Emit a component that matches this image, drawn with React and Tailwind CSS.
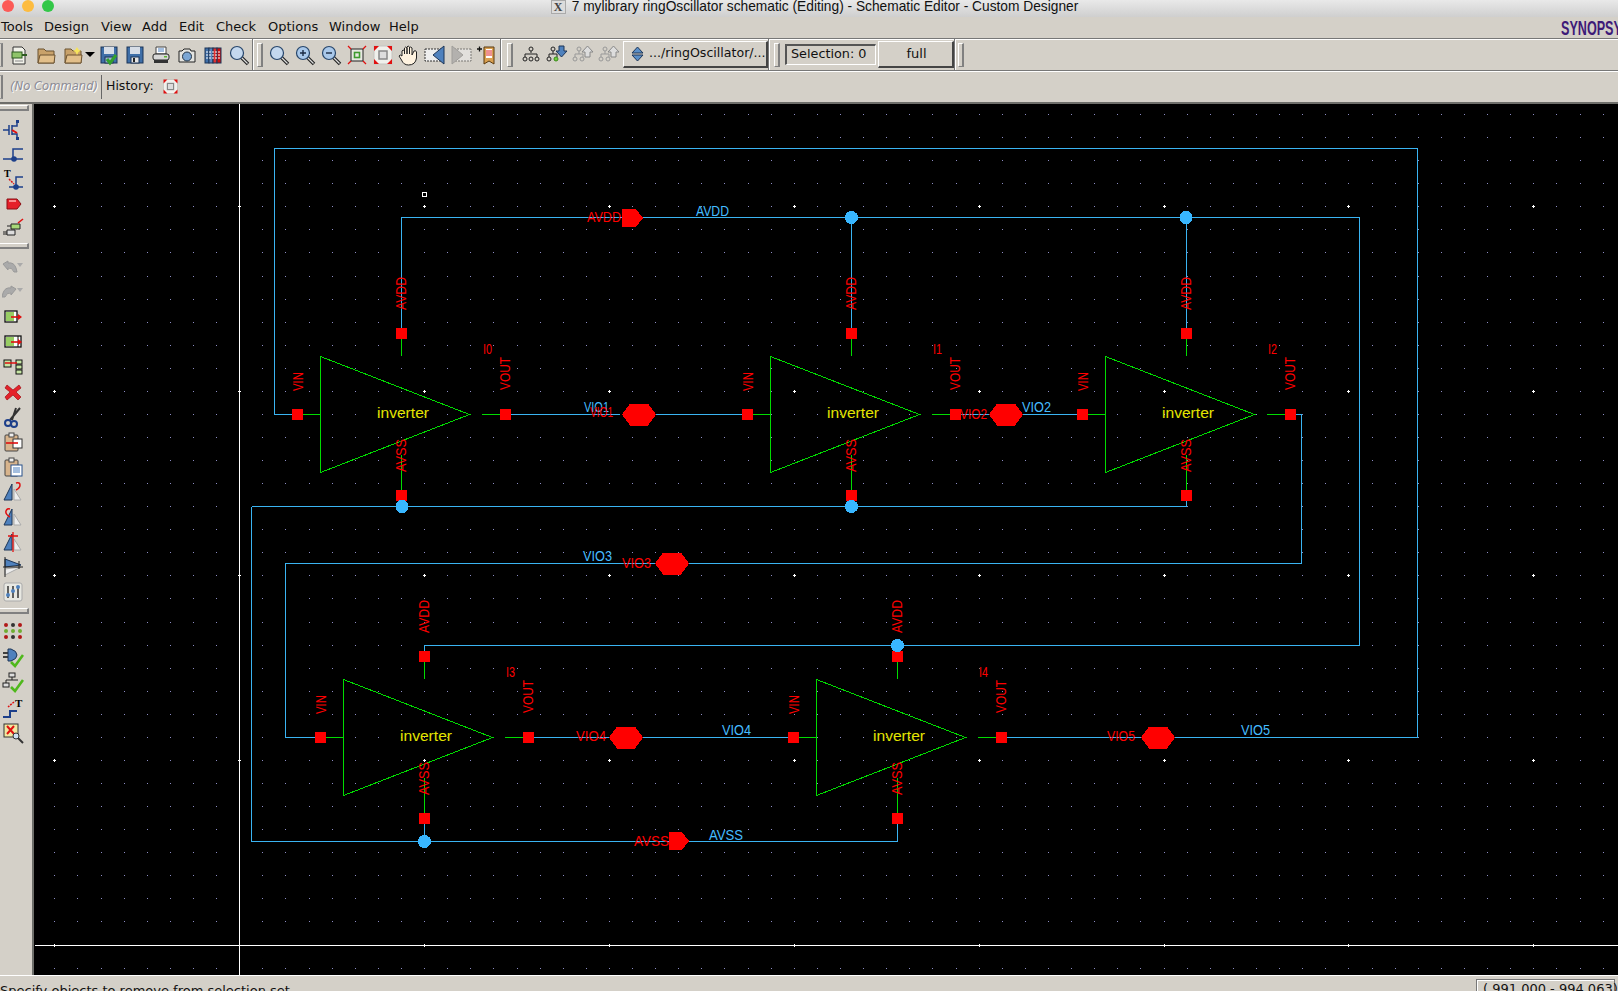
import React from 'react';

const RED = '#ff0000';
const WIRE = '#3ab4f2';
const LABEL_BLUE = '#45bcff';
const GREEN = '#00dc00';

const Svg = ({ children, size = 22 }) => (
  <svg width={size} height={size} viewBox="0 0 22 22">{children}</svg>
);

// toolbar icons
const Doc = () => (
  <Svg>
    <path d="M5 3h9l3 3v14H5z" fill="#f2f2ea" stroke="#333" />
    <rect x="4" y="8" width="10" height="6" fill="#8fc46a" stroke="#2d5a20" />
    <path d="M14 11h5" stroke="#2d5a20" strokeWidth="2" />
    <path d="M7 17h8" stroke="#888" />
  </Svg>
);
const Folder = ({ star }) => (
  <Svg>
    <path d="M3 5h6l2 2h8v12H3z" fill="#c9a26a" stroke="#6b5230" />
    <path d="M3 19l2-8h15l-1 8z" fill="#e2bf8a" stroke="#6b5230" />
    {star && <path d="M15 3l1.5 2.5L19 7l-2.5 1L15 11l-1.5-3L11 7l2.5-1.5z" fill="#f7e45c" />}
  </Svg>
);
const Disk = ({ check }) => (
  <Svg>
    <rect x="3" y="3" width="16" height="16" fill="#3f6fa8" stroke="#1d3557" />
    <rect x="6" y="3" width="10" height="7" fill="#d7dde6" />
    <rect x="7" y="13" width="8" height="6" fill={check ? '#9db5d0' : '#e4e4e4'} stroke="#1d3557" />
    {!check && <rect x="9" y="14" width="2" height="4" fill="#222" />}
    {check && <path d="M9 15l3 4 6-8" fill="none" stroke="#33a02c" strokeWidth="3" />}
  </Svg>
);
const Printer = () => (
  <Svg>
    <path d="M6 3h10v7H6z" fill="#fff" stroke="#444" />
    <path d="M8 5h6M8 7h6" stroke="#4a7fc0" />
    <rect x="3" y="10" width="16" height="6" rx="2" fill="#d8d8d8" stroke="#222" />
    <rect x="4" y="16" width="14" height="3" fill="#333" />
    <rect x="14" y="12" width="3" height="1.5" fill="#5cb531" />
  </Svg>
);
const Camera = () => (
  <Svg>
    <path d="M3 7h3l2-2h6l1 2h4v11H3z" fill="#e4e4e0" stroke="#222" />
    <circle cx="11" cy="12.5" r="4.5" fill="#7ba6d4" stroke="#234" />
  </Svg>
);
const Books = () => (
  <Svg>
    <rect x="3" y="4" width="4" height="15" fill="#3f6fa8" stroke="#1d3557" />
    <rect x="7" y="4" width="4" height="15" fill="#5a86bd" stroke="#1d3557" />
    <rect x="11" y="4" width="4" height="15" fill="#d33" stroke="#1d3557" />
    <rect x="15" y="4" width="4" height="15" fill="#c11" stroke="#1d3557" />
    <path d="M4 8h14M4 11h14M4 14h14" stroke="#fff" strokeDasharray="2 1" />
  </Svg>
);
const Glass = ({ mark, pale }) => (
  <Svg>
    <path d="M13 13l7 7" stroke="#222" strokeWidth="3.5" />
    <path d="M13.5 13.5l6 6" stroke="#ddd" strokeWidth="1.2" />
    <circle cx="9" cy="9" r="6.5" fill={pale ? '#c4d8ee' : '#a9c8ea'} stroke="#27466b" strokeWidth="1.2" />
    {mark !== undefined && <path d={mark ? 'M6 9h6M9 6v6' : 'M6 9h6'} stroke="#1b2b44" strokeWidth="1.4" />}
  </Svg>
);
const ZoomFit = () => (
  <Svg>
    <rect x="5" y="5" width="12" height="12" fill="#e8e8e2" stroke="#222" />
    <rect x="8.5" y="8.5" width="5" height="5" fill="none" stroke="#3f9a2e" strokeWidth="1.6" />
    <path d="M2 2l3 3M20 2l-3 3M2 20l3-3M20 20l-3-3" stroke="#e01010" strokeWidth="1.3" />
  </Svg>
);
const ZoomAll = ({ size }) => (
  <Svg size={size}>
    <rect x="2" y="2" width="18" height="18" fill="#f0f0ec" stroke="#c4c4c0" />
    <rect x="7" y="7" width="8" height="8" fill="#ddd" stroke="#888" strokeWidth="1.5" />
    <path d="M2 2h5l-5 5zM20 2h-5l5 5zM2 20h5l-5-5zM20 20h-5l5-5z" fill="#e01010" />
  </Svg>
);
const Hand = () => (
  <Svg>
    <path d="M4 12V7q1-2 2.5 0v3V4q1-2 2.5 0v6V3q1-2 2.5 0v7V4q1-2 2.5 0v7l2-4q2-1 2.5 1v6q-1 7-8 7-5 0-7-5L1 12q1-2 3 0z" fill="#fff3e0" stroke="#222" />
  </Svg>
);
const PrevView = ({ flip, grey }) => (
  <Svg>
    <g transform={flip ? 'translate(22 0) scale(-1 1)' : undefined} opacity={grey ? 0.55 : 1}>
      <rect x="1" y="5" width="17" height="12" fill="#eee" stroke="#333" strokeDasharray="2 1" />
      <path d="M20 2v18L9 11z" fill={grey ? '#999' : '#4f81bd'} stroke={grey ? '#777' : '#1d3557'} />
    </g>
  </Svg>
);
const Bookmark = () => (
  <Svg>
    <path d="M1 5h5M3.5 2.5v5" stroke="#111" strokeWidth="1.3" />
    <path d="M8 3h10v17l-5-3-5 3z" fill="#d9a050" stroke="#5a3a10" />
    <rect x="10" y="5" width="6" height="9" fill="#fff" />
    <path d="M10 7h6M10 9h6M10 11h6" stroke="#d22" />
  </Svg>
);
const Hier = ({ grey, arrow, green }) => {
  const c = grey ? '#999' : '#222';
  return (
    <Svg>
      <circle cx={arrow ? 7 : 11} cy="5" r="2" fill="none" stroke={c} />
      <path d={arrow ? 'M7 7v3M3 13V10h8v3' : 'M11 7v2M5 13V10h12v3'} fill="none" stroke={c} />
      <circle cx={arrow ? 3 : 5} cy="15" r="2" fill="none" stroke={c} />
      <circle cx={arrow ? 10 : 17} cy="15" r="2" fill={green ? '#6fcf3a' : 'none'} stroke={green ? '#3a8a1a' : c} />
      {!arrow && <circle cx="11" cy="15" r="2" fill="none" stroke={c} />}
      {arrow === 'down' && <path d="M13 2h5v5h3l-5.5 6L10 7h3z" fill="#4f81bd" stroke="#1d3557" />}
      {arrow === 'up' && <path d="M13 13V8h-3l5.5-6L21 8h-3v5z" fill="#ddd" stroke="#888" />}
    </Svg>
  );
};

// side bar icons
const Mos = () => (
  <Svg>
    <path d="M1 11h6M7 6v10M10 6v10M10 7h5V2M10 15h5v5" fill="none" stroke="#1d3f8a" strokeWidth="1.5" />
    <path d="M10 11l5 3" stroke="#e01010" strokeWidth="2" />
    <rect x="14" y="1" width="3" height="3" fill="#1d3f8a" />
    <rect x="14" y="18" width="3" height="3" fill="#1d3f8a" />
  </Svg>
);
const WireIcon = ({ t }) => (
  <Svg>
    {t && <text x="2" y="9" fontSize="10" fontWeight="700" fontFamily="Liberation Serif, serif" fill="#000">T</text>}
    <path d={t ? 'M7 19h14M14 19V9h7' : 'M1 15h20M11 15V5h10'} fill="none" stroke="#1d3f8a" strokeWidth="1.5" />
    <circle cx={t ? 14 : 12} cy={t ? 19 : 15} r="2.8" fill="#1d3f8a" />
    {t && <path d="M7 11l5 5" stroke="#e01010" strokeWidth="1.5" strokeDasharray="2 1" />}
  </Svg>
);
const PinIcon = () => (
  <Svg>
    <path d="M5 6h10l4 5-4 5H5z" fill="#e5202a" stroke="#8a0f14" />
    <path d="M7 8h7" stroke="#ffb0b0" strokeWidth="1.5" />
  </Svg>
);
const Plugs = () => (
  <Svg>
    <path d="M9 7h9v5H9z" fill="#a8d878" stroke="#222" />
    <path d="M5 13h8v5H5z" fill="#ddd" stroke="#222" />
    <path d="M1 15h4M1 17h4M5 9h4" stroke="#222" />
    <path d="M21 2l-5 4" stroke="#e01010" strokeWidth="1.6" />
  </Svg>
);
const Undo = ({ flip }) => (
  <Svg>
    <g transform={flip ? 'translate(15 0) scale(-1 1)' : undefined}>
      <path d="M1 8l5-3v2q6-1 8 5l1 4h-3q-2-5-6-4v2z" fill="#aaa" stroke="#999" />
    </g>
    <path d="M15 7h6l-3 4z" fill="#aaa" />
  </Svg>
);
const BoxArrow = ({ split }) => (
  <Svg>
    <rect x="3" y="5" width={split ? 16 : 12} height="11" fill="#fff" stroke="#111" strokeWidth="1.3" />
    <rect x="4" y="6" width="8" height="9" fill="#98cd63" />
    {split && <path d="M16 5v11" stroke="#111" />}
    <path d="M9 11h10" stroke="#e01010" strokeWidth="1.6" />
    <path d="M20 11l-4-3v6z" fill="#e01010" />
  </Svg>
);
const Blocks = () => (
  <Svg>
    <rect x="2" y="4" width="7" height="7" fill="#c6e6a4" stroke="#111" />
    <rect x="14" y="4" width="6" height="4" fill="#c6e6a4" stroke="#111" />
    <rect x="14" y="9" width="6" height="4" fill="#c6e6a4" stroke="#111" />
    <rect x="14" y="14" width="6" height="4" fill="#c6e6a4" stroke="#111" />
    <path d="M3 7h12" stroke="#e01010" strokeWidth="1.5" />
  </Svg>
);
const RedX = () => (
  <Svg>
    <path d="M5 4l6 5 6-5 2 3-5 4 5 5-3 3-5-5-6 5-2-3 5-5-5-4z" fill="#e4222a" stroke="#a01015" strokeWidth=".7" />
  </Svg>
);
const Scissors = () => (
  <Svg>
    <path d="M18 2L8 14M14 2l-4 12" stroke="#333" strokeWidth="2" />
    <circle cx="6" cy="17" r="3" fill="none" stroke="#1d3f8a" strokeWidth="2" />
    <circle cx="12" cy="18" r="3" fill="none" stroke="#1d3f8a" strokeWidth="2" />
  </Svg>
);
const Clip = ({ arrow }) => (
  <Svg>
    <rect x="3" y="4" width="13" height="16" rx="1" fill="#d8b48c" stroke="#444" />
    <rect x="7" y="2" width="5" height="4" fill="#eee" stroke="#444" />
    {arrow ? (
      <>
        <rect x="11" y="8" width="9" height="9" fill="#fff" stroke="#333" />
        <path d="M4 12h12" stroke="#e01010" strokeWidth="1.6" />
      </>
    ) : (
      <>
        <rect x="9" y="9" width="11" height="11" fill="#fff" stroke="#28508a" />
        <path d="M11 12h7M11 14h7M11 16h7" stroke="#4a7fc0" />
      </>
    )}
  </Svg>
);
const Tri = ({ variant }) => (
  <Svg>
    {variant !== 'hflip' && <path d="M10 3v16H2z" fill="#4f81bd" stroke="#1d3557" />}
    {variant !== 'hflip' && <path d="M12 8v11h7z" fill="#eee" stroke="#aaa" />}
    {variant === 'hflip' && <path d="M3 3l16 6-16 2z" fill="#4f81bd" stroke="#1d3557" />}
    {variant === 'hflip' && <path d="M3 13l16-2-16 8z" fill="#eee" stroke="#aaa" />}
    {variant === 'cw' && <path d="M14 9q4-2 4-5t-4-2" fill="none" stroke="#e01010" strokeWidth="1.5" />}
    {variant === 'ccw' && <path d="M8 11Q3 8 4 5t4-2" fill="none" stroke="#e01010" strokeWidth="1.5" />}
    {variant === 'vflip' && <path d="M11 1v20M6 5h10" stroke="#e01010" strokeWidth="1.3" />}
    {variant === 'hflip' && <path d="M1 11h20M3 1v20M17 5v8" stroke="#222" strokeWidth="1" />}
  </Svg>
);
const Sliders = () => (
  <Svg>
    <rect x="2" y="2" width="18" height="18" rx="2" fill="#e8e8e2" stroke="#aaa" />
    <path d="M6 5v12M11 5v12M16 5v12" stroke="#333" strokeWidth="1.5" />
    <circle cx="6" cy="14" r="2" fill="#4f81bd" />
    <circle cx="11" cy="10" r="2" fill="#4f81bd" />
    <circle cx="16" cy="6" r="2" fill="#4f81bd" />
  </Svg>
);
const DotsIcon = () => (
  <Svg>
    {[5, 11, 17].map((y, r) =>
      [4, 11, 18].map((x) => (
        <circle key={`${x}-${y}`} cx={x} cy={y} r="2" fill={r === 1 ? '#6fae32' : x === 11 ? '#333' : '#b01818'} />
      ))
    )}
  </Svg>
);
const Check = () => <path d="M9 16l4 4 8-11" fill="none" stroke="#4fb81c" strokeWidth="2.6" />;
const PlugCheck = () => (
  <Svg>
    <path d="M1 7h5M1 11h5" stroke="#111" strokeWidth="1.4" />
    <path d="M6 3h3q6 2 6 6t-6 6H6z" fill="#4f81bd" stroke="#1d3557" />
    <Check />
  </Svg>
);
const TreeCheck = () => (
  <Svg>
    <rect x="7" y="2" width="6" height="4" fill="#ddd" stroke="#222" />
    <path d="M10 6v3M4 12V9h12" fill="none" stroke="#222" />
    <rect x="1" y="12" width="6" height="4" fill="#ddd" stroke="#222" />
    <Check />
  </Svg>
);
const StepT = () => (
  <Svg>
    <text x="13" y="10" fontSize="11" fontWeight="700" fontFamily="Liberation Serif, serif" fill="#000">T</text>
    <path d="M1 20h7v-6h7" fill="none" stroke="#1d3f8a" strokeWidth="2" />
    <path d="M12 5L6 10" stroke="#e01010" strokeWidth="1.5" strokeDasharray="2 1" />
  </Svg>
);
const XFind = () => (
  <Svg>
    <rect x="2" y="2" width="14" height="13" fill="#f2e8a0" stroke="#333" />
    <path d="M5 4l7 8M12 4l-7 8" stroke="#e01010" strokeWidth="2" />
    <circle cx="14" cy="14" r="3" fill="#cfe0f2" stroke="#333" />
    <path d="M16 16l5 5" stroke="#333" strokeWidth="2" />
  </Svg>
);

const Handle = () => (
  <div className="w-[6px] h-[24px] border-l border-t border-white border-r-2 border-b border-r-[#808080] border-b-[#808080] bg-[#d4d0c8] shrink-0" />
);
const Divider = () => <div className="w-[2px] self-stretch border-l border-[#777] border-r border-r-white shrink-0" />;
const Tool = ({ children }) => <div className="w-[26px] flex items-center justify-center shrink-0">{children}</div>;
const SideHandle = ({ className }) => (
  <div className={`w-[29px] h-[6px] border-t border-white border-b-2 border-r-2 border-b-[#808080] border-r-[#808080] shrink-0 ${className}`} />
);
const SideTool = ({ children, className }) => (
  <div className={`flex items-center justify-center shrink-0 w-[25px] ${className}`}>{children}</div>
);

// schematic
const Label = ({ x, y, len, text, fill = RED, rot, size = 15 }) => (
  <text
    x={x}
    y={y}
    fill={fill}
    fontSize={size}
    fontFamily="Liberation Sans, sans-serif"
    textLength={len}
    lengthAdjust="spacingAndGlyphs"
    transform={rot ? `rotate(-90 ${x} ${y})` : undefined}
  >
    {text}
  </text>
);

const Sq = ({ x, y }) => <rect x={Math.round(x) - 5} y={Math.round(y) - 5} width="11" height="11" fill={RED} />;

const Inverter = ({ dx, dy, name }) => (
  <g transform={`translate(${dx} ${dy})`}>
    <path d="M320.5 356.5L469.5 414.5L320.5 472.5Z" fill="none" stroke={GREEN} />
    <path d="M303 414.5H320M401.5 338V356M482 414.5H500M401.5 455V490" stroke={GREEN} fill="none" />
    <Sq x={297} y={414} />
    <Sq x={401} y={333} />
    <Sq x={401} y={495} />
    <Sq x={505} y={414} />
    <Label x={303} y={391} len={19} text="VIN" rot />
    <Label x={406} y={310} len={33} text="AVDD" rot />
    <Label x={510} y={390} len={33} text="VOUT" rot />
    <Label x={406} y={472} len={33} text="AVSS" rot />
    <Label x={483} y={354} len={9} text={name} />
    <Label x={377} y={418} len={52} text="inverter" fill="#e4e400" size={14} />
  </g>
);

const Hex = ({ x, y }) => (
  <path d={`M${x - 17} ${y + 0.5}L${x - 9} ${y - 10.5}H${x + 9}L${x + 17} ${y + 0.5}L${x + 9} ${y + 11.5}H${x - 9}Z`} fill={RED} />
);

const Junction = ({ x, y }) => <circle cx={x} cy={y} r="6.5" fill="#38b6ff" />;

const gridPath = () => {
  let minor = '';
  let major = '';
  for (let i = 0; i < 69; i++) {
    for (let j = -4; j < 34; j++) {
      const x = Math.round(54.3 + 23.11 * i);
      const y = Math.round(206.3 + 23.07 * j);
      if (i % 8 === 0 && (j + 8) % 8 === 0) {
        major += `M${x - 1} ${y}h3v1h-3zM${x} ${y - 1}h1v3h-1z`;
      } else {
        minor += `M${x} ${y}h1v1h-1z`;
      }
    }
  }
  return { minor, major };
};

const Schematic = () => {
  const { minor, major } = gridPath();
  return (
    <svg className="flex-1 block bg-black" width="1584" height="871" viewBox="34 104 1584 871" shapeRendering="crispEdges">
      <path d={minor} fill="#8d8dc4" />
      <path d={major} fill="#ffffff" />
      <rect x="239" y="104" width="1" height="871" fill="#fff" />
      <rect x="35" y="945" width="1583" height="1" fill="#fff" />

      <path
        fill="none"
        stroke={WIRE}
        d="M297 414.5H274.5V148.5H1417.5V737.5H1001M401.5 333V217.5H1359.5V645.5H424.5V656M851.5 217V333M1186.5 217V333
           M505 414.5H620M655 414.5H747M955 414.5H1082M1290 414.5H1301.5V563.5H285.5V737.5H320
           M401.5 495V506.5M251.5 506.5H1186.5V495M851.5 495V506M251.5 506.5V841.5H897.5V818M424.5 818V841M897.5 645V656
           M528 737.5H793"
      />

      <Inverter dx={0} dy={0} name="I0" />
      <Inverter dx={450} dy={0} name="I1" />
      <Inverter dx={785} dy={0} name="I2" />
      <Inverter dx={23} dy={323} name="I3" />
      <Inverter dx={496} dy={323} name="I4" />

      <Junction x={851.5} y={217.5} />
      <Junction x={1186} y={217.5} />
      <Junction x={402} y={506.5} />
      <Junction x={851.5} y={506.5} />
      <Junction x={897.5} y={645.5} />
      <Junction x={424.5} y={841.5} />

      <path d="M622 209H636L643 218L636 227H622Z" fill={RED} />
      <path d="M669 832H682L689 841L682 850H669Z" fill={RED} />
      <Hex x={639} y={414} />
      <Hex x={1006} y={414} />
      <Hex x={672} y={563} />
      <Hex x={626} y={737} />
      <Hex x={1158} y={737} />

      <Label x={587} y={222} len={34} text="AVDD" />
      <Label x={696} y={216} len={33} text="AVDD" fill={LABEL_BLUE} />
      <Label x={584} y={412} len={25} text="VIO1" fill={LABEL_BLUE} />
      <Label x={590} y={417} len={23} text="VIO1" />
      <Label x={960} y={419} len={27} text="VIO2" />
      <Label x={1022} y={412} len={29} text="VIO2" fill={LABEL_BLUE} />
      <Label x={583} y={561} len={29} text="VIO3" fill={LABEL_BLUE} />
      <Label x={622} y={568} len={29} text="VIO3" />
      <Label x={576} y={741} len={30} text="VIO4" />
      <Label x={722} y={735} len={29} text="VIO4" fill={LABEL_BLUE} />
      <Label x={1107} y={741} len={28} text="VIO5" />
      <Label x={1241} y={735} len={29} text="VIO5" fill={LABEL_BLUE} />
      <Label x={634} y={846} len={35} text="AVSS" />
      <Label x={709} y={840} len={34} text="AVSS" fill={LABEL_BLUE} />

      <rect x="422.5" y="192.5" width="4" height="4" fill="#000" stroke="#fff" />
    </svg>
  );
};

const menus = [
  ['Tools', 'w-[43px]'],
  ['Design', 'w-[57px]'],
  ['View', 'w-[41px]'],
  ['Add', 'w-[37px]'],
  ['Edit', 'w-[37px]'],
  ['Check', 'w-[52px]'],
  ['Options', 'w-[61px]'],
  ['Window', 'w-[60px]'],
  ['Help', 'w-[40px]'],
];

export default function App() {
  return (
    <div className="w-[1618px] h-[991px] overflow-hidden flex flex-col bg-[#d4d0c8] text-[#111] font-['DejaVu_Sans',sans-serif]">
      {/* Title bar */}
      <div className="relative h-[17px] shrink-0 flex items-center justify-center bg-gradient-to-b from-[#e9e9e9] to-[#cfcfcf] overflow-hidden">
        <div className="absolute left-[2px] top-0 flex gap-[8px]">
          <div className="w-[12px] h-[12px] rounded-full bg-[#fc5b57]" />
          <div className="w-[12px] h-[12px] rounded-full bg-[#fdbc40]" />
          <div className="w-[12px] h-[12px] rounded-full bg-[#33c748]" />
        </div>
        <div className="flex items-center gap-[6px] -mt-[3px] pl-[11px]">
          <div className="w-[15px] h-[14px] bg-[#dcdcdc] border border-[#aaa] flex items-center justify-center text-[12px] leading-none font-['Liberation_Serif',serif] font-bold text-[#444]">X</div>
          <span className="text-[13.75px] leading-[14px] font-['Liberation_Sans',sans-serif]">7 mylibrary ringOscillator schematic (Editing) - Schematic Editor - Custom Designer</span>
        </div>
      </div>

      {/* Menu bar */}
      <div className="relative h-[21px] shrink-0 flex items-center pl-[1px] pb-[2px] text-[13px]">
        {menus.map(([m, w]) => (
          <span key={m} className={`block shrink-0 ${w}`}>{m}</span>
        ))}
        <div className="absolute right-0 top-[1px] w-[57px] h-[20px] overflow-hidden">
          <span className="block origin-left scale-x-[0.6] whitespace-nowrap text-[21px] leading-[20px] font-bold font-['Liberation_Sans',sans-serif] text-[#3d1a78]">SYNOPSYS</span>
        </div>
      </div>

      {/* Main toolbar */}
      <div className="h-[33px] shrink-0 flex items-center border-t border-t-[#777] border-b border-b-[#777] shadow-[inset_0_1px_0_#fff,0_1px_0_#fff]">
        <div className="w-[3px] h-[24px] border-r-2 border-[#808080] border-y border-y-[#999] shrink-0" />
        <div className="w-[3px] shrink-0" />
        <Tool><Doc /></Tool>
        <div className="w-[1px] shrink-0" />
        <Tool><Folder /></Tool>
        <div className="w-[1px] shrink-0" />
        <Tool><Folder star /></Tool>
        <div className="w-[12px] -ml-[2px] shrink-0 flex justify-center">
          <div className="w-0 h-0 border-x-[5px] border-x-transparent border-t-[5px] border-t-black" />
        </div>
        <Tool><Disk check /></Tool>
        <Tool><Disk /></Tool>
        <Tool><Printer /></Tool>
        <Tool><Camera /></Tool>
        <Tool><Books /></Tool>
        <Tool><Glass pale /></Tool>
        <Divider />
        <div className="w-[3px] shrink-0" />
        <Handle />
        <div className="w-[3px] shrink-0" />
        <Tool><Glass pale /></Tool>
        <Tool><Glass mark /></Tool>
        <Tool><Glass mark={false} /></Tool>
        <Tool><ZoomFit /></Tool>
        <Tool><ZoomAll /></Tool>
        <Tool><Hand /></Tool>
        <Tool><PrevView /></Tool>
        <Tool><PrevView flip grey /></Tool>
        <Tool><Bookmark /></Tool>
        <Divider />
        <div className="w-[5px] shrink-0" />
        <Handle />
        <div className="w-[5px] shrink-0" />
        <Tool><Hier /></Tool>
        <Tool><Hier arrow="down" green /></Tool>
        <Tool><Hier arrow="up" grey /></Tool>
        <Tool><Hier arrow="up" grey /></Tool>
        <div className="w-[145px] h-[27px] ml-[1px] shrink-0 flex items-center pl-[7px] gap-[5px] whitespace-nowrap border-t border-l border-white border-r-2 border-b-2 border-r-[#444] border-b-[#444] text-[12.6px]">
          <svg width="13" height="16" viewBox="0 0 13 16" className="shrink-0">
            <path d="M6.5 1l5.500 6H1zM6.500 15l5.500-6H1z" fill="#5a8fc8" stroke="#1d3557" />
          </svg>
          <span className="-mt-[1px]">.../ringOscillator/...</span>
        </div>
        <Divider />
        <div className="w-[4px] shrink-0" />
        <Handle />
        <div className="w-[5px] shrink-0" />
        <div className="w-[91px] h-[21px] shrink-0 flex items-center pl-[4px] pb-[2px] border-t-2 border-l-2 border-[#555] border-r border-b border-r-white border-b-white text-[12.8px]">Selection: 0</div>
        <div className="w-[76px] h-[27px] ml-[2px] shrink-0 flex items-center justify-center pl-[2px] border-t border-l border-white border-r-2 border-b-2 border-r-[#444] border-b-[#444] text-[13px]">full</div>
        <Divider />
        <div className="w-[2px] shrink-0" />
        <Handle />
      </div>

      {/* Command bar */}
      <div className="h-[31px] shrink-0 flex items-center border-t border-t-white pb-[1px]">
        <div className="w-[3px] h-[24px] border-r-2 border-[#808080] border-y border-y-[#999] shrink-0" />
        <span className="ml-[7px] w-[87px] shrink-0 whitespace-nowrap text-[11.6px] italic text-[#8c8c96] [text-shadow:1px_1px_0_#fff]">(No Command)</span>
        <div className="w-[1px] h-[24px] ml-[4px] bg-[#666] shrink-0" />
        <span className="ml-[4px] text-[12.5px]">History:</span>
        <div className="ml-[8px] flex items-center"><ZoomAll size={17} /></div>
      </div>
      <div className="h-[2px] shrink-0 bg-[#6e6e6a]" />

      {/* Side bar and canvas */}
      <div className="flex-1 min-h-0 flex">
        <div className="w-[34px] shrink-0 flex flex-col border-r-2 border-r-[#6e6e6a] pt-[1px]">
          <SideHandle className="mb-[7px]" />
          {[<Mos />, <WireIcon />, <WireIcon t />, <PinIcon />, <Plugs />].map((ic, i) => (
            <SideTool key={i} className="h-[24.5px]">{ic}</SideTool>
          ))}
          <SideHandle className="mt-[2px] mb-[6px]" />
          {[
            <Undo />, <Undo flip />, <BoxArrow />, <BoxArrow split />, <Blocks />, <RedX />, <Scissors />,
            <Clip arrow />, <Clip />, <Tri variant="cw" />, <Tri variant="ccw" />, <Tri variant="vflip" />,
            <Tri variant="hflip" />, <Sliders />,
          ].map((ic, i) => (
            <SideTool key={i} className="h-[25px]">{ic}</SideTool>
          ))}
          <SideHandle className="mt-[3px] mb-[5px]" />
          {[<DotsIcon />, <PlugCheck />, <TreeCheck />, <StepT />, <XFind />].map((ic, i) => (
            <SideTool key={i} className="h-[25.5px]">{ic}</SideTool>
          ))}
        </div>
        <Schematic />
      </div>

      {/* Status bar */}
      <div className="relative h-[16px] shrink-0 border-t border-t-white overflow-hidden">
        <span className="absolute left-0 top-[7px] text-[13px] leading-[16px] whitespace-nowrap">Specify objects to remove from selection set.</span>
        <div className="absolute left-[1476px] top-[3px] w-[139px] h-[20px] border border-[#777] shadow-[inset_1px_1px_0_#fff] pl-[6px] pt-[1px] text-[13px] leading-[16px] whitespace-nowrap">( 991.000 - 994.063)</div>
      </div>
    </div>
  );
}
